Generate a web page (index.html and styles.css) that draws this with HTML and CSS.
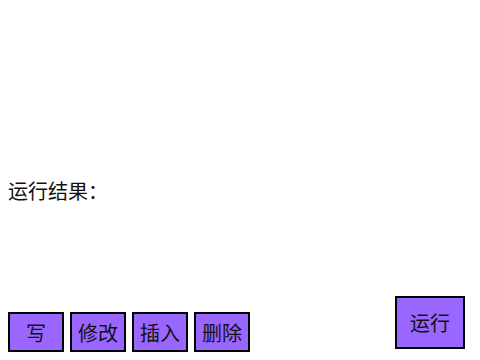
FILE: index.html
```html
<!DOCTYPE html>
<html lang="zh">
<head>
    <meta charset="UTF-8">
    <meta name="viewport" content="width=device-width, initial-scale=1.0">
    <title>运行</title>
    <link rel="stylesheet" href="styles.css">
</head>
<body>
    <div class="app">
        <div class="output">
            <p class="result-label">运行结果：</p>
            <p id="result"></p>
        </div>
        <div class="toolbar">
            <div class="edit-group">
                <button class="button">写</button>
                <button class="button">修改</button>
                <button class="button">插入</button>
                <button class="button">删除</button>
            </div>
            <button class="button" id="run-btn">运行</button>
        </div>
    </div>
</body>
</html>
```
FILE: styles.css
```css
body {
    margin: 0;
    background-color: #fff;
    font-family: "Noto Sans CJK SC", "Noto Sans", sans-serif;
    color: #111;
}
.app {
    display: flex;
    flex-direction: column;
    height: 360px;
    padding: 0 15px 8px 8px;
    box-sizing: border-box;
}
.output {
    flex: 1;
}
.result-label {
    margin: 177px 0 0;
    font-size: 20px;
    line-height: 28px;
}
.toolbar {
    display: flex;
    justify-content: space-between;
    align-items: flex-end;
}
.edit-group {
    display: flex;
    gap: 6px;
}
.button {
    width: 56px;
    height: 40px;
    padding: 0;
    font-family: inherit;
    font-size: 20px;
    color: #111;
    background-color: #9966ff;
    border: 2px solid #000;
    box-sizing: border-box;
}
#run-btn {
    width: 70px;
    height: 53px;
    margin-bottom: 3px;
}
```
